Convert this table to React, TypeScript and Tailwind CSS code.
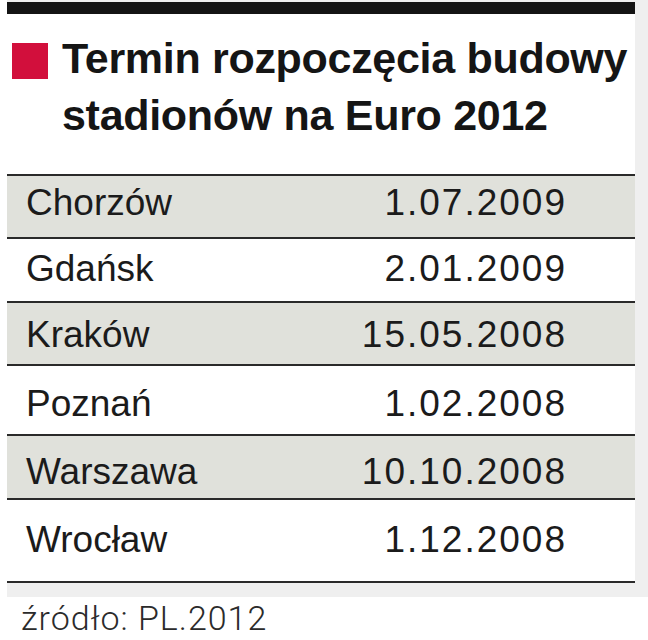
const rows = [
  { city: 'Chorzów', date: '1.07.2009', shaded: true, size: 'h-[63px] pt-0' },
  { city: 'Gdańsk', date: '2.01.2009', shaded: false, size: 'h-[64px] pt-[3px]' },
  { city: 'Kraków', date: '15.05.2008', shaded: true, size: 'h-[63px] pt-[5px]' },
  { city: 'Poznań', date: '1.02.2008', shaded: false, size: 'h-[70px] pt-[11px]' },
  { city: 'Warszawa', date: '10.10.2008', shaded: true, size: 'h-[64px] pt-[9px]' },
  { city: 'Wrocław', date: '1.12.2008', shaded: false, size: 'h-[83px] pt-[13px]' },
]

const App = () => {
  return (
    <div className="h-[640px] w-[648px] bg-white font-['Liberation_Sans',Arial,sans-serif] text-[#1b1b1b]">
      <div className="ml-[7px] w-[641px] bg-[#efefef] pr-[13px] pb-[14px] pt-[2px]">
        <div className="bg-white">
          <div className="h-[12px] bg-[#141414]" />

          <div className="flex items-start gap-[14px] pt-[16px] pb-[30px] pl-[5px]">
            <div className="mt-[13px] h-[36px] w-[36px] shrink-0 bg-[#d20f3c]" />
            <h1 className="text-[43px] font-bold leading-[57px] tracking-[-0.3px] text-[#151515]">
              Termin rozpoczęcia budowy
              <br />
              stadionów na Euro 2012
            </h1>
          </div>

          <div className="border-t-2 border-[#2a2a2a]">
            {rows.map((row) => (
              <div
                key={row.city}
                className={`flex items-start justify-between border-b-2 border-[#2a2a2a] pl-[19px] pr-[68px] text-[37px] leading-[54px] ${
                  row.shaded ? 'bg-[#e0e1db]' : 'bg-white'
                } ${row.size}`}
              >
                <span>{row.city}</span>
                <span className="tracking-[2px]">{row.date}</span>
              </div>
            ))}
          </div>
        </div>
      </div>

      <p className="pl-[21px] pt-[1px] font-['Roboto',sans-serif] text-[34px] font-light leading-[40px] tracking-[1px] text-[#2b2b2b]">
        źródło: PL.2012
      </p>
    </div>
  )
}

export default App
